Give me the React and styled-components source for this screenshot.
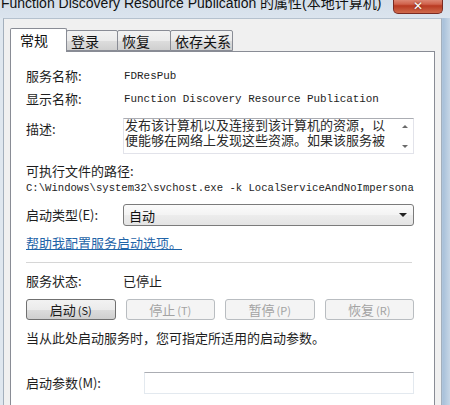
import React from "react";
import styled, { createGlobalStyle } from "styled-components";

const GlobalStyle = createGlobalStyle`
  html, body {
    margin: 0;
    padding: 0;
  }
  body {
    width: 450px;
    height: 405px;
    overflow: hidden;
    background: #d8e2ec;
    font-family: "Noto Sans CJK SC", "Liberation Sans", sans-serif;
    color: #1e1e1e;
  }
`;

const Window = styled.div`
    width: 450px;
    height: 405px;
    display: flex;
    flex-direction: column;
    overflow: hidden;
    background: linear-gradient(90deg, #dfe7ef 0%, #dbe4ed 97%, #a9c1da 98.5%, #c6d6e6 100%);
`;

const TitleBar = styled.div`
    height: 18px;
    flex: none;
    position: relative;
    background: linear-gradient(180deg, #d4dee9 0%, #dbe4ee 100%);
`;

const TitleText = styled.div`
    font-family: "Liberation Sans", "Noto Sans CJK SC", sans-serif;
    font-size: 14px;
    line-height: 18px;
    margin-top: -6px;
    padding-left: 1px;
    color: #111;
    white-space: nowrap;
`;

const CloseButton = styled.div`
    position: absolute;
    left: 393px;
    top: -3px;
    width: 50px;
    height: 17px;
    box-sizing: border-box;
    border: 1px solid #7a2a22;
    border-top: none;
    border-radius: 0 0 5px 5px;
    background: linear-gradient(180deg, #e6a08f 0%, #d0624c 45%, #b93a22 55%, #cf6a4c 100%);
    display: flex;
    align-items: center;
    justify-content: center;
    color: #fff;
    font-family: "DejaVu Sans", sans-serif;
    font-weight: bold;
    font-size: 12px;
    line-height: 12px;
    padding-top: 2px;
    text-shadow: 0 0 2px #5a1a10;
`;

const Client = styled.div`
    flex: 1;
    display: flex;
    flex-direction: column;
    margin: 0 8px 0 3px;
    padding: 8px 6px 0 6px;
    background: #f0f0f0;
    border-left: 1px solid #a3afbc;
    border-right: 1px solid #a3afbc;
    border-top: 1px solid #b5c1ce;
    min-height: 0;
`;

const TabStrip = styled.div`
    display: flex;
    align-items: flex-end;
    height: 24px;
    flex: none;
    position: relative;
    z-index: 1;
`;

const Tab = styled.div`
    box-sizing: border-box;
    height: ${p => (p.$active ? "24px" : "21px")};
    width: ${p => p.$w}px;
    margin-bottom: ${p => (p.$active ? "-1px" : "0")};
    margin-left: ${p => (p.$active ? "0" : "-1px")};
    border: 1px solid #898c95;
    border-bottom: ${p => (p.$active ? "none" : "1px solid #898c95")};
    border-radius: 2px 2px 0 0;
    background: ${p => (p.$active ? "#ffffff" : "linear-gradient(180deg, #f2f2f2 0%, #ebebeb 50%, #dddddd 51%, #cfcfcf 100%)")};
    font-size: 14px;
    line-height: 20px;
    white-space: nowrap;
    overflow: hidden;
    padding-left: ${p => (p.$active ? "9px" : "4px")};
    padding-top: ${p => (p.$active ? "1px" : "0")};
    color: #111;
`;

const Panel = styled.div`
    flex: 1;
    background: #ffffff;
    border: 1px solid #898c95;
    border-bottom: none;
    padding: 16px 20px 0 15px;
    display: flex;
    flex-direction: column;
`;

const Row = styled.div`
    display: flex;
    align-items: ${p => p.$align || "center"};
    margin-top: ${p => p.$mt || 0}px;
    min-height: 16px;
`;

const Label = styled.div`
    width: ${p => p.$w || 97}px;
    flex: none;
    font-size: 13px;
    line-height: 16px;
    padding-top: ${p => p.$pt || 0}px;
    color: #1e1e1e;
`;

const Text = styled.div`
    font-size: 13px;
    line-height: 16px;
    color: #1e1e1e;
    white-space: nowrap;
`;

const Mono = styled.div`
    font-family: "Liberation Mono", "DejaVu Sans Mono", monospace;
    font-size: ${p => p.$size}px;
    line-height: 16px;
    color: #1e1e1e;
    white-space: nowrap;
    overflow: hidden;
    padding-left: ${p => p.$pl || 0}px;
`;

const TextBox = styled.div`
    flex: 1;
    height: 36px;
    box-sizing: border-box;
    border: 1px solid #e2e3ea;
    border-top-color: #abadb3;
    display: flex;
    overflow: hidden;
`;

const TextBoxBody = styled.div`
    flex: 1;
    font-size: 13px;
    line-height: 15px;
    margin-top: -2px;
    padding-left: 1px;
    overflow: hidden;
    color: #2a2a2a;
    white-space: nowrap;
`;

const ScrollBar = styled.div`
    width: 16px;
    flex: none;
    display: flex;
    flex-direction: column;
    justify-content: space-between;
    align-items: center;
    padding: 6px 0 5px;
`;

const Arrow = styled.div`
    width: 0;
    height: 0;
    border-left: 3px solid transparent;
    border-right: 3px solid transparent;
    ${p => (p.$up ? "border-bottom: 3px solid #6a6a6a;" : "border-top: 3px solid #6a6a6a;")}
`;

const Select = styled.div`
    flex: 1;
    height: 22px;
    box-sizing: border-box;
    border: 1px solid #7b7b7b;
    border-radius: 3px;
    background: linear-gradient(180deg, #fbfbfb 0%, #f3f3f3 50%, #ececec 51%, #e4e4e4 100%);
    display: flex;
    align-items: center;
    justify-content: space-between;
    padding: 0 6px 0 5px;
    font-size: 13px;
    color: #111;
`;

const DropArrow = styled.div`
    width: 0;
    height: 0;
    border-left: 4px solid transparent;
    border-right: 4px solid transparent;
    border-top: 4px solid #222;
`;

const HelpLink = styled.a`
    font-size: 13px;
    line-height: 16px;
    color: #1f64a8;
    text-decoration: underline;
    cursor: pointer;
`;

const Separator = styled.div`
    height: 1px;
    background: #d6d6d6;
    border-bottom: 1px solid #ffffff;
    margin-top: ${p => p.$mt}px;
    margin-right: 2px;
`;

const ButtonRow = styled.div`
    display: grid;
    grid-template-columns: repeat(4, 1fr);
    column-gap: 10px;
    margin-top: ${p => p.$mt}px;
`;

const Button = styled.div`
    height: 21px;
    box-sizing: border-box;
    border: 1px solid ${p => (p.$disabled ? "#b9bdc1" : "#707070")};
    border-radius: 3px;
    background: ${p => (p.$disabled ? "#f4f4f4" : "linear-gradient(180deg, #f2f2f2 0%, #ebebeb 50%, #dddddd 51%, #cfcfcf 100%)")};
    color: ${p => (p.$disabled ? "#a3a3a3" : "#1a1a1a")};
    font-size: 13px;
    line-height: 19px;
    text-align: center;
    & small {
        font-size: 11px;
        margin-left: 2px;
    }
`;

const Input = styled.div`
    flex: 1;
    height: 22px;
    box-sizing: border-box;
    border: 1px solid #e3e9ef;
    border-top-color: #abadb3;
    background: #fff;
`;

export default function App() {
    return (
        <Window>
            <GlobalStyle />
            <TitleBar>
                <TitleText>Function Discovery Resource Publication 的属性(本地计算机)</TitleText>
                <CloseButton>✕</CloseButton>
            </TitleBar>
            <Client>
                <TabStrip>
                    <Tab $active $w={57}>常规</Tab>
                    <Tab $w={52}>登录</Tab>
                    <Tab $w={54}>恢复</Tab>
                    <Tab $w={63}>依存关系</Tab>
                </TabStrip>
                <Panel>
                    <Row>
                        <Label>服务名称:</Label>
                        <Mono $size={10.9} $pl={1}>FDResPub</Mono>
                    </Row>
                    <Row $mt={7}>
                        <Label>显示名称:</Label>
                        <Mono $size={10.9} $pl={1}>Function Discovery Resource Publication</Mono>
                    </Row>
                    <Row $mt={11} $align="flex-start">
                        <Label $pt={3}>描述:</Label>
                        <TextBox>
                            <TextBoxBody>
                                发布该计算机以及连接到该计算机的资源，以<br />
                                便能够在网络上发现这些资源。如果该服务被
                            </TextBoxBody>
                            <ScrollBar>
                                <Arrow $up />
                                <Arrow />
                            </ScrollBar>
                        </TextBox>
                    </Row>
                    <Row $mt={9}>
                        <Text>可执行文件的路径:</Text>
                    </Row>
                    <Row $mt={1}>
                        <Mono $size={10.6}>C:\Windows\system32\svchost.exe -k LocalServiceAndNoImpersonation</Mono>
                    </Row>
                    <Row $mt={8}>
                        <Label>启动类型(E):</Label>
                        <Select>
                            <span>自动</span>
                            <DropArrow />
                        </Select>
                    </Row>
                    <Row $mt={9}>
                        <HelpLink>帮助我配置服务启动选项。</HelpLink>
                    </Row>
                    <Separator $mt={11} />
                    <Row $mt={9}>
                        <Label>服务状态:</Label>
                        <Text>已停止</Text>
                    </Row>
                    <ButtonRow $mt={10}>
                        <Button>启动<small>(S)</small></Button>
                        <Button $disabled>停止<small>(T)</small></Button>
                        <Button $disabled>暂停<small>(P)</small></Button>
                        <Button $disabled>恢复<small>(R)</small></Button>
                    </ButtonRow>
                    <Row $mt={10}>
                        <Text>当从此处启动服务时，您可指定所适用的启动参数。</Text>
                    </Row>
                    <Row $mt={26}>
                        <Label $w={118}>启动参数(M):</Label>
                        <Input />
                    </Row>
                </Panel>
            </Client>
        </Window>
    );
}
